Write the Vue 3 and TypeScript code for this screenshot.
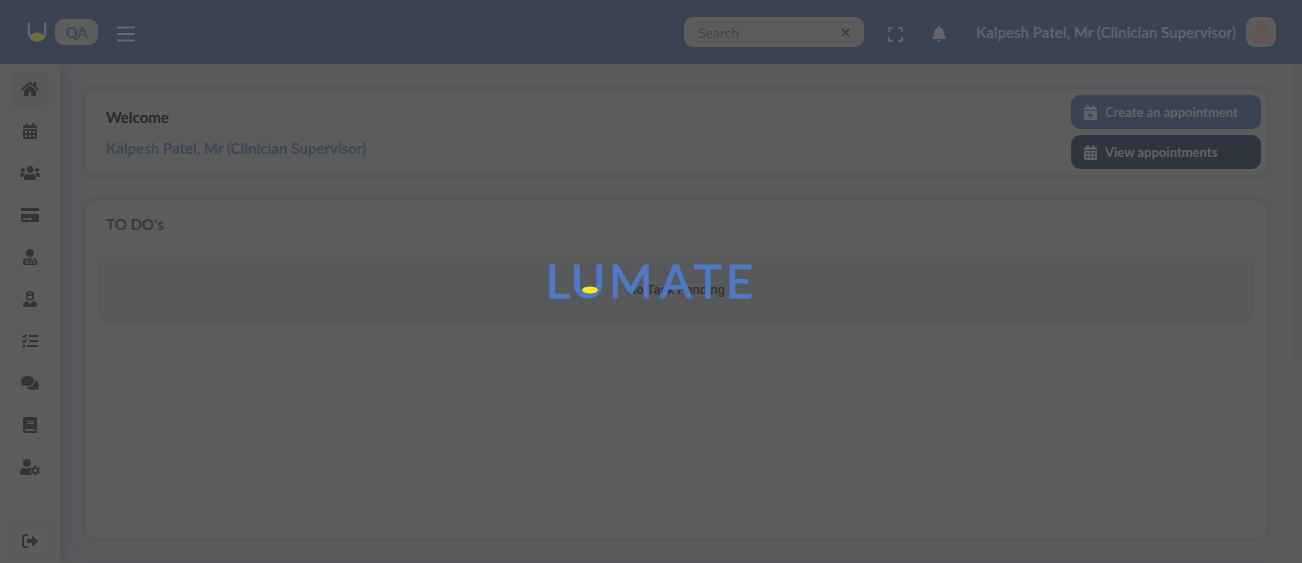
<script setup lang="ts">
import { ref } from 'vue'

interface Icon { box: string; d: string; w: number; h: number }
interface NavItem { label: string; icon: string }

const search = ref('')
const userName = 'Kalpesh Patel, Mr (Clinician Supervisor)'

const icons: Record<string, Icon> = {
  home: { box: '0 0 576 512', w: 18, h: 16, d: 'M280.37 148.26L96 300.11V464a16 16 0 0 0 16 16l112.06-.29a16 16 0 0 0 15.92-16V368a16 16 0 0 1 16-16h64a16 16 0 0 1 16 16v95.64a16 16 0 0 0 16 16.05L464 480a16 16 0 0 0 16-16V300L295.67 148.26a12.19 12.19 0 0 0-15.3 0zM571.6 251.47L488 182.56V44.05a12 12 0 0 0-12-12h-56a12 12 0 0 0-12 12v72.61L318.47 43a48 48 0 0 0-61 0L4.34 251.47a12 12 0 0 0-1.6 16.9l25.5 31A12 12 0 0 0 45.15 301l235.22-193.74a12.19 12.19 0 0 1 15.3 0L530.9 301a12 12 0 0 0 16.9-1.6l25.5-31a12 12 0 0 0-1.7-16.93z' },
  calendar: { box: '0 0 448 512', w: 14, h: 16, d: 'M0 464c0 26.5 21.5 48 48 48h352c26.5 0 48-21.5 48-48V192H0zM64 256h64v64H64zm128 0h64v64h-64zm128 0h64v64h-64zM64 384h64v64H64zm128 0h64v64h-64zm128 0h64v64h-64zM400 64h-48V16c0-8.8-7.2-16-16-16h-32c-8.8 0-16 7.2-16 16v48H160V16c0-8.8-7.2-16-16-16h-32c-8.8 0-16 7.2-16 16v48H48C21.5 64 0 85.5 0 112v48h448v-48c0-26.5-21.5-48-48-48z' },
  calendarPlus: { box: '0 0 448 512', w: 13, h: 15, d: 'M0 464c0 26.5 21.5 48 48 48h352c26.5 0 48-21.5 48-48V192H0zM200 256h48v72h72v48h-72v72h-48v-72h-72v-48h72zM400 64h-48V16c0-8.8-7.2-16-16-16h-32c-8.8 0-16 7.2-16 16v48H160V16c0-8.8-7.2-16-16-16h-32c-8.8 0-16 7.2-16 16v48H48C21.5 64 0 85.5 0 112v48h448v-48c0-26.5-21.5-48-48-48z' },
  users: { box: '0 0 640 512', w: 20, h: 16, d: 'M96 224c35.3 0 64-28.7 64-64s-28.7-64-64-64-64 28.7-64 64 28.7 64 64 64zm448 0c35.3 0 64-28.7 64-64s-28.7-64-64-64-64 28.7-64 64 28.7 64 64 64zm32 32h-64c-17.6 0-33.5 7.1-45.1 18.6 40.3 22.1 68.9 62 75.1 109.4h66c17.7 0 32-14.3 32-32v-32c0-35.3-28.7-64-64-64zm-256 0c61.9 0 112-50.1 112-112S381.9 32 320 32 208 82.1 208 144s50.1 112 112 112zm76.8 32h-8.3c-20.8 10-43.9 16-68.5 16s-47.6-6-68.5-16h-8.3C179.6 288 128 339.6 128 403.2V432c0 26.5 21.5 48 48 48h288c26.5 0 48-21.5 48-48v-28.8c0-63.6-51.6-115.2-115.2-115.2zm-223.7-13.4C161.5 263.1 145.6 256 128 256H64c-35.3 0-64 28.7-64 64v32c0 17.7 14.3 32 32 32h65.9c6.3-47.4 34.9-87.3 75.2-109.4z' },
  card: { box: '0 0 576 512', w: 18, h: 16, d: 'M0 448c0 18 14 32 32 32h512c18 0 32-14 32-32V224H0zm192-84c0-6.6 5.4-12 12-12h136c6.6 0 12 5.4 12 12v40c0 6.6-5.4 12-12 12H204c-6.6 0-12-5.4-12-12zm-128 0c0-6.6 5.4-12 12-12h72c6.6 0 12 5.4 12 12v40c0 6.6-5.4 12-12 12H76c-6.6 0-12-5.4-12-12zM576 64v64H0V64c0-18 14-32 32-32h512c18 0 32 14 32 32z' },
  doctor: { box: '0 0 448 512', w: 14, h: 16, d: 'M224 256c70.7 0 128-57.3 128-128S294.7 0 224 0 96 57.3 96 128s57.3 128 128 128zM104 424c0 13.3 10.7 24 24 24s24-10.7 24-24-10.7-24-24-24-24 10.7-24 24zm216-135.4v49c36.5 7.4 64 39.8 64 78.4v41.7c0 7.6-5.4 14.2-12.9 15.7l-32.2 6.4c-4.3.9-8.5-1.9-9.4-6.3l-3.1-15.7c-.9-4.3 1.9-8.6 6.3-9.4l19.3-3.9V416c0-62.8-96-65.1-96 1.9v26.7l19.3 3.9c4.3.9 7.1 5.1 6.3 9.4l-3.1 15.7c-.9 4.3-5.1 7.1-9.4 6.3l-31.2-4.2c-7.9-1.1-13.8-7.8-13.8-15.9V416c0-38.6 27.5-70.9 64-78.4v-45.2c-2.2.7-4.4 1.1-6.6 1.9-18 6.3-37.3 9.8-57.4 9.8s-39.4-3.5-57.4-9.8c-7.4-2.6-14.9-4.2-22.6-5.2v81.6c23.1 6.9 40 28.1 40 53.4 0 30.9-25.1 56-56 56s-56-25.1-56-56c0-25.3 16.9-46.5 40-53.4v-80.4C48.5 301 0 355.8 0 422.4v44.8C0 491.9 20.1 512 44.8 512h358.4c24.7 0 44.8-20.1 44.8-44.8v-44.8c0-72-56.8-130.3-128-133.8z' },
  nurse: { box: '0 0 448 512', w: 14, h: 16, d: 'M319.41,320,224,415.39,128.59,320C57.1,323.1,0,381.6,0,453.79A58.21,58.21,0,0,0,58.21,512H389.79A58.21,58.21,0,0,0,448,453.79C448,381.6,390.9,323.1,319.41,320ZM224,304A128,128,0,0,0,352,176V65.82a32,32,0,0,0-20.76-30L246.47,4.07a64,64,0,0,0-44.94,0L116.76,35.86A32,32,0,0,0,96,65.82V176A128,128,0,0,0,224,304ZM184,71.67a5,5,0,0,1,5-5h21.67V45a5,5,0,0,1,5-5h16.66a5,5,0,0,1,5,5V66.67H259a5,5,0,0,1,5,5V88.33a5,5,0,0,1-5,5H237.33V115a5,5,0,0,1-5,5H215.67a5,5,0,0,1-5-5V93.33H189a5,5,0,0,1-5-5ZM144,160H304v16a80,80,0,0,1-160,0Z' },
  tasks: { box: '0 0 512 512', w: 16, h: 16, d: 'M139 38l19 17a14 14 0 0 1 1 20L77 166a14 14 0 0 1-20 1L5 117a14 14 0 0 1 0-20l17-17a14 14 0 0 1 20 0l23 22 55-63a14 14 0 0 1 19-1zM139 198l19 17a14 14 0 0 1 1 20L77 326a14 14 0 0 1-20 1L5 277a14 14 0 0 1 0-20l17-17a14 14 0 0 1 20 0l23 22 55-63a14 14 0 0 1 19-1zM64 368a48 48 0 1 0 0 96 48 48 0 0 0 0-96zM240 64h256a16 16 0 0 1 16 16v32a16 16 0 0 1-16 16H240a16 16 0 0 1-16-16V80a16 16 0 0 1 16-16zM240 224h256a16 16 0 0 1 16 16v32a16 16 0 0 1-16 16H240a16 16 0 0 1-16-16v-32a16 16 0 0 1 16-16zM176 384h320a16 16 0 0 1 16 16v32a16 16 0 0 1-16 16H176a16 16 0 0 1-16-16v-32a16 16 0 0 1 16-16z' },
  comments: { box: '0 0 576 512', w: 18, h: 16, d: 'M416 192c0-88.4-93.1-160-208-160S0 103.6 0 192c0 34.3 14.1 65.9 38 92-13.4 30.2-35.5 54.2-35.8 54.5-2.2 2.3-2.8 5.7-1.5 8.7S4.8 352 8 352c36.6 0 66.9-12.3 88.7-25 32.2 15.7 70.3 25 111.3 25 114.9 0 208-71.6 208-160zm122 220c23.9-26 38-57.7 38-92 0-66.9-53.5-124.2-129.3-148.1.9 6.6 1.3 13.3 1.3 20.1 0 105.9-107.7 192-240 192-10.8 0-21.3-.8-31.7-1.9C207.8 439.6 281.8 480 368 480c41 0 79.1-9.2 111.3-25 21.8 12.7 52.1 25 88.7 25 3.2 0 6.1-1.9 7.3-4.8 1.3-2.9.7-6.3-1.5-8.7-.3-.3-22.4-24.2-35.8-54.5z' },
  book: { box: '0 0 448 512', w: 14, h: 16, d: 'M448 360V24c0-13.3-10.7-24-24-24H96C43 0 0 43 0 96v320c0 53 43 96 96 96h328c13.3 0 24-10.7 24-24v-16c0-7.5-3.5-14.3-8.9-18.7-4.2-15.4-4.2-59.3 0-74.7 5.4-4.3 8.9-11.1 8.9-18.6zM128 134c0-3.3 2.7-6 6-6h212c3.3 0 6 2.7 6 6v20c0 3.3-2.7 6-6 6H134c-3.3 0-6-2.7-6-6zm0 64c0-3.3 2.7-6 6-6h212c3.3 0 6 2.7 6 6v20c0 3.3-2.7 6-6 6H134c-3.3 0-6-2.7-6-6zm253.4 250H96c-17.7 0-32-14.3-32-32 0-17.6 14.4-32 32-32h285.4c-1.9 17.1-1.9 46.9 0 64z' },
  userCog: { box: '0 0 640 512', w: 20, h: 16, d: 'M224 256a128 128 0 1 0 0-256 128 128 0 0 0 0 256zM134 288C60 288 0 348 0 422v42c0 27 21 48 48 48h335c-8-8-10-16-9-25l-43-25c-14-9-20-25-15-41 5-14 11-28 20-42 8-12 20-18 33-16v-46c-20-18-40-29-55-29h-17a174 174 0 0 1-146 0zM459 210h62l9 49 33 19 47-16 30 52-38 33v38l38 33-30 52-47-16-33 19-9 49h-62l-9-49-33-19-47 16-30-52 38-33v-38l-38-33 30-52 47 16 33-19zM490 315a51 51 0 1 0 0 102 51 51 0 0 0 0-102z' },
  exit: { box: '0 0 512 512', w: 16, h: 16, d: 'M160 32H96C43 32 0 75 0 128v256c0 53 43 96 96 96h64a32 32 0 0 0 0-64H96c-18 0-32-14-32-32V128c0-18 14-32 32-32h64a32 32 0 0 0 0-64zM502 274L358 410c-14 13-38 3-38-17v-73H192c-18 0-32-14-32-32v-64c0-18 14-32 32-32h128v-73c0-20 24-30 38-17l144 136c11 10 11 26 0 36z' },
  bell: { box: '0 0 448 512', w: 14, h: 16, d: 'M224 512c35.32 0 63.97-28.65 63.97-64H160.03c0 35.35 28.65 64 63.97 64zm215.39-149.71c-19.32-20.76-55.47-51.99-55.47-154.29 0-77.7-54.48-139.9-127.94-155.16V32c0-17.67-14.32-32-31.98-32s-31.98 14.33-31.98 32v20.84C118.56 68.1 64.08 130.3 64.08 208c0 102.3-36.15 133.53-55.47 154.29-6 6.45-8.66 14.16-8.61 21.71.11 16.4 12.98 32 32.1 32h383.8c19.12 0 32-15.6 32.1-32 .05-7.55-2.61-15.27-8.61-21.71z' },
}

const nav: NavItem[] = [
  { label: 'Home', icon: 'home' },
  { label: 'Calendar', icon: 'calendar' },
  { label: 'Clients', icon: 'users' },
  { label: 'Billing', icon: 'card' },
  { label: 'Clinicians', icon: 'doctor' },
  { label: 'Staff', icon: 'nurse' },
  { label: 'Tasks', icon: 'tasks' },
  { label: 'Messages', icon: 'comments' },
  { label: 'Library', icon: 'book' },
  { label: 'User settings', icon: 'userCog' },
]
</script>

<template>
  <div class="app">
    <header class="topbar">
      <svg class="mark" width="20" height="22" viewBox="0 0 20 22" aria-hidden="true">
        <path d="M1.8 1.500v9.500a8.200 8.800 0 0 0 16.400 0V1.500" fill="none" stroke="#626569" stroke-width="2.500" />
        <ellipse cx="10" cy="15.500" rx="6.200" ry="4" fill="#716c3b" />
      </svg>
      <span class="env">QA</span>
      <button class="plain menu" aria-label="Toggle menu">
        <svg width="18" height="16" viewBox="0 0 18 16"><path d="M1 1.500h16M1 8h16M1 14.500h16" stroke="currentColor" stroke-width="2" stroke-linecap="round" /></svg>
      </button>
      <div class="search">
        <input v-model="search" type="text" placeholder="Search" aria-label="Search" />
        <button class="plain clear" aria-label="Clear search" @click="search = ''">
          <svg width="9" height="9" viewBox="0 0 9 9"><path d="M1 1l7 7M8 1l-7 7" stroke="currentColor" stroke-width="1.600" /></svg>
        </button>
      </div>
      <button class="plain full" aria-label="Full screen">
        <svg width="15" height="15" viewBox="0 0 15 15"><path d="M1 5V1h4M10 1h4v4M14 10v4h-4M5 14H1v-4" fill="none" stroke="currentColor" stroke-width="2" /></svg>
      </button>
      <button class="plain bell" aria-label="Notifications">
        <svg :width="icons.bell.w" :height="icons.bell.h" :viewBox="icons.bell.box"><path :d="icons.bell.d" fill="currentColor" /></svg>
      </button>
      <span class="user">{{ userName }}</span>
      <button class="plain avatar" aria-label="Account">
        <svg width="19" height="22" :viewBox="icons.doctor.box"><path :d="icons.doctor.d" fill="currentColor" /></svg>
      </button>
    </header>

    <div class="body">
      <nav class="side" aria-label="Main">
        <a v-for="(item, i) in nav" :key="item.label" href="#" class="item" :class="{ active: i === 0 }" :aria-label="item.label">
          <svg :width="icons[item.icon].w" :height="icons[item.icon].h" :viewBox="icons[item.icon].box"><path :d="icons[item.icon].d" fill="currentColor" fill-rule="evenodd" /></svg>
        </a>
        <button class="plain logout" aria-label="Log out">
          <svg :width="icons.exit.w" :height="icons.exit.h" :viewBox="icons.exit.box"><path :d="icons.exit.d" fill="currentColor" /></svg>
        </button>
      </nav>

      <main class="main">
        <section class="card welcome">
          <div class="greeting">
            <h1>Welcome</h1>
            <p>{{ userName }}</p>
          </div>
          <div class="actions">
            <button class="action create">
              <svg :width="icons.calendarPlus.w" :height="icons.calendarPlus.h" :viewBox="icons.calendarPlus.box"><path :d="icons.calendarPlus.d" fill="currentColor" fill-rule="evenodd" /></svg>
              Create an appointment
            </button>
            <button class="action view">
              <svg width="13" height="15" :viewBox="icons.calendar.box"><path :d="icons.calendar.d" fill="currentColor" fill-rule="evenodd" /></svg>
              View appointments
            </button>
          </div>
        </section>
        <section class="card todo">
          <h2>TO DO's</h2>
          <div class="empty">No Task Pending</div>
        </section>
        <section class="card next"></section>
      </main>
      <div class="track"><div class="thumb"></div></div>
    </div>

    <div class="loading" role="status">
      <svg width="222" height="60" viewBox="-10 -10 222 60">
        <text x="-4 21 59 110 144 176" y="36">LUMATE</text>
        <ellipse cx="40" cy="28" rx="8" ry="3.500" fill="#fbe622" />
      </svg>
    </div>
  </div>
</template>

<style>
body { margin: 0; background: #595b5d; overflow: hidden; }
</style>

<style scoped>
* { box-sizing: border-box; }
.app {
  height: 100vh;
  display: flex;
  flex-direction: column;
  position: relative;
  overflow: hidden;
  background: #595b5d;
  font-family: Lato, "Liberation Sans", sans-serif;
  font-size: 16px;
}
svg { display: block; flex: none; }
button, input { font: inherit; }
.plain { border: 0; padding: 0; background: none; color: inherit; display: flex; align-items: center; justify-content: center; }
.topbar {
  flex: none;
  height: 64px;
  display: flex;
  align-items: center;
  padding: 0 26px 0 27px;
  background: #3a4351;
  color: #67696c;
}
.env {
  width: 43px;
  height: 26px;
  margin-left: 8px;
  border-radius: 9px;
  display: flex;
  align-items: center;
  justify-content: center;
  background: #5d5d5d;
  color: #3d4654;
  font-size: 15px;
  font-weight: 700;
}
.menu { margin-left: 19px; margin-top: 3px; }
.search {
  width: 180px;
  height: 30px;
  margin-left: auto;
  padding: 0 14px;
  display: flex;
  align-items: center;
  border-radius: 9px;
  background: #5c5c5c;
}
.search input { flex: 1; min-width: 0; padding: 0; border: 0; outline: 0; background: none; color: #3f3f41; font-size: 14px; }
.search input::placeholder { color: #434445; opacity: 1; }
.clear { color: #38393b; }
.full { margin-left: 24px; margin-top: 4px; color: #5f6369; }
.bell { margin-left: 29px; margin-top: 3px; color: #636467; }
.user { margin-left: 30px; white-space: nowrap; font-size: 15px; font-weight: 700; color: #5f6368; }
.avatar { width: 30px; height: 30px; margin-left: 10px; border-radius: 9px; background: #5c5c5c; color: #6a5250; }
.body { flex: 1; min-height: 0; display: flex; }
.side {
  flex: none;
  width: 60px;
  padding: 8px 8px 4px 10px;
  display: flex;
  flex-direction: column;
  gap: 8px;
  background: #5c5c5c;
  color: #353334;
  box-shadow: 4px 0 16px rgba(66, 66, 74, 0.4);
}
.item { flex: none; width: 39px; height: 34px; border-radius: 8px; display: flex; align-items: center; justify-content: center; color: inherit; }
.active { background: #57595b; }
.logout { width: 43px; height: 36px; margin-top: auto; margin-left: -2px; border: 1px solid #585858; border-radius: 8px; flex: none; }
.main { flex: 1; min-width: 0; padding: 25px 25px 0; display: flex; flex-direction: column; gap: 25px; overflow: hidden; }
.card { flex: none; border-radius: 10px; background: #5c5c5c; box-shadow: 0 0 4px rgba(66, 66, 74, 0.5); }
.welcome { display: flex; justify-content: space-between; padding: 6px 6px 6px 21px; }
h1, h2, p { margin: 0; font-size: 15px; line-height: 20px; font-weight: 700; }
.greeting { padding-top: 12px; display: flex; flex-direction: column; gap: 11px; }
h1 { color: #292a2b; }
p { color: #3d4757; }
.actions { width: 190px; display: flex; flex-direction: column; gap: 6px; }
.action {
  height: 34px;
  padding: 0 13px;
  display: flex;
  align-items: center;
  gap: 8px;
  border: 0;
  border-radius: 9px;
  color: #626365;
  font-size: 13px;
  font-weight: 700;
}
.create { background: #3a4351; }
.view { background: #2f353e; }
.todo { height: 338px; padding: 14px 13px; }
h2 { padding-left: 8px; color: #343b46; }
.empty {
  height: 64px;
  margin-top: 24px;
  padding-bottom: 2px;
  display: flex;
  align-items: center;
  justify-content: center;
  border: 1px solid #56575a;
  border-radius: 12px;
  background: #57595b;
  color: #303132;
  font: 500 13px Roboto, sans-serif;
}
.next { height: 60px; }
.track { flex: none; width: 10px; background: #5a5b5c; }
.thumb { height: 60%; border-radius: 0 0 5px 5px; background: #595856; }
.loading { position: absolute; inset: 0; display: flex; align-items: center; justify-content: center; }
.loading text { font-family: Lato, sans-serif; font-size: 47px; fill: #5079c5; stroke: #5079c5; stroke-width: 1px; }
</style>
